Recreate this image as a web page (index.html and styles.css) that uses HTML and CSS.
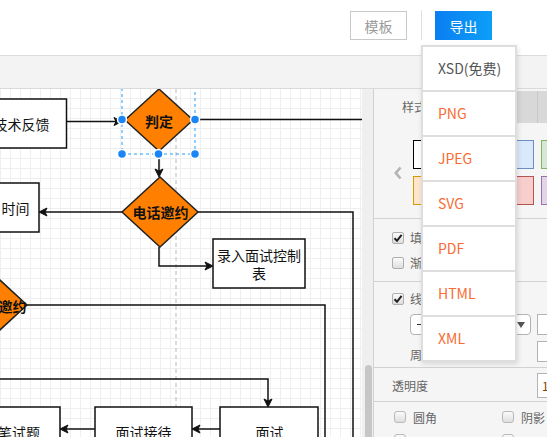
FILE: index.html
```html
<!DOCTYPE html>
<html lang="zh-CN">
<head>
<meta charset="utf-8">
<title>流程图编辑器</title>
<link rel="stylesheet" href="styles.css">
</head>
<body>
<header class="topbar">
  <button class="btn btn-template">模板</button>
  <span class="divider"></span>
  <button class="btn btn-export">导出</button>
</header>
<div class="toolstrip"></div>
<main class="workspace">
  <div class="canvas">
    <svg class="diagram" width="362" height="348" viewBox="0 89 362 348">
      <line class="guide" x1="176" y1="89" x2="176" y2="437"/>
      <!-- edges -->
      <polyline class="edge" points="66.5,121.5 116,121.5"/>
      <polygon class="head" points="122,121.5 114,117.5 116,121.5 114,125.5"/>
      <polyline class="edge" points="193,119.5 362,119.5"/>
      <polyline class="edge" points="159,151 159,171"/>
      <polygon class="head" points="159,177 155,169 159,171 163,169"/>
      <polyline class="edge" points="122,212 45,212"/>
      <polygon class="head" points="39,212 47,208 45,212 47,216"/>
      <polyline class="edge" points="198,212 353,212 353,437"/>
      <polyline class="edge" points="159,247 159,266 207,266"/>
      <polygon class="head" points="213,266 205,262 207,266 205,270"/>
      <polyline class="edge" points="27,305 325,305 325,437"/>
      <polyline class="edge" points="0,379 268,379 268,401"/>
      <polygon class="head" points="268,407 264,399 268,401 272,399"/>
      <polyline class="edge" points="220,429 198,429"/>
      <polygon class="head" points="192,429 200,425 198,429 200,433"/>
      <polyline class="edge" points="95,429 66,429"/>
      <polygon class="head" points="60,429 68,425 66,429 68,433"/>
      <!-- boxes -->
      <rect class="box" x="-30" y="99" width="96.5" height="49"/>
      <rect class="box" x="-70" y="183" width="109" height="49"/>
      <rect class="box" x="213" y="239" width="92" height="49"/>
      <rect class="box" x="-40" y="407" width="100" height="50"/>
      <rect class="box" x="95" y="407" width="97" height="50"/>
      <rect class="box" x="220" y="407" width="98" height="50"/>
      <!-- diamonds -->
      <polygon class="diamond" points="159,89 193,120 159,151 125,120"/>
      <polygon class="diamond" points="160,177 198,212 160,247 122,212"/>
      <polygon class="diamond" points="-11,270 27,305 -11,340 -49,305"/>
      <!-- labels -->
      <text class="label" x="49.5" y="124" text-anchor="end">技术反馈</text>
      <text class="label" x="29.5" y="207.5" text-anchor="end">时间</text>
      <text class="label" x="259" y="255" text-anchor="middle">录入面试控制<tspan x="259" dy="18">表</tspan></text>
      <text class="label" x="40" y="432" text-anchor="end">笔试题</text>
      <text class="label" x="143.5" y="432" text-anchor="middle">面试接待</text>
      <text class="label" x="269.5" y="432" text-anchor="middle">面试</text>
      <text class="label bold" x="159" y="121" text-anchor="middle">判定</text>
      <text class="label bold" x="160.5" y="212" text-anchor="middle">电话邀约</text>
      <text class="label bold" x="26.5" y="306" text-anchor="end">邀约</text>
      <!-- selection -->
      <polyline class="sel" points="122,88 122,154 195,154 195,88"/>
      <circle class="handle" cx="122" cy="119.5" r="4.5"/>
      <circle class="handle" cx="195" cy="119.5" r="4.5"/>
      <circle class="handle" cx="122" cy="154" r="4.5"/>
      <circle class="handle" cx="158.5" cy="154" r="4.5"/>
      <circle class="handle" cx="195" cy="154" r="4.5"/>
    </svg>
  </div>
  <div class="vscroll"><div class="thumb"></div></div>
  <aside class="panel">
    <div class="tabs">
      <div class="tab active">样式</div>
      <div class="tab gray"></div>
      <div class="tab gray"></div>
    </div>
    <div class="swatches">
      <div class="prev">
        <svg width="8" height="14" viewBox="0 0 8 14"><path d="M6.5 1.5 L1.8 7 L6.5 12.5" fill="none" stroke="#b3b3b3" stroke-width="2.6"/></svg>
      </div>
      <div class="swatch-grid">
        <span class="swatch sw-default"></span>
        <span class="swatch sw-gray"></span>
        <span class="swatch sw-yellow"></span>
        <span class="swatch sw-blue"></span>
        <span class="swatch sw-green"></span>
        <span class="swatch sw-orange"></span>
        <span class="swatch sw-yellow"></span>
        <span class="swatch sw-gray"></span>
        <span class="swatch sw-red"></span>
        <span class="swatch sw-purple"></span>
      </div>
    </div>
    <div class="section fill">
      <label class="check-row"><span class="checkbox checked"><svg width="10" height="10" viewBox="0 0 10 10"><path d="M1.5 5.2 L4 7.8 L8.6 1.8" fill="none" stroke="#222" stroke-width="2"/></svg></span>填充</label>
      <label class="check-row"><span class="checkbox"></span>渐变</label>
    </div>
    <div class="section line">
      <label class="check-row"><span class="checkbox checked"><svg width="10" height="10" viewBox="0 0 10 10"><path d="M1.5 5.2 L4 7.8 L8.6 1.8" fill="none" stroke="#222" stroke-width="2"/></svg></span>线条</label>
      <div class="line-row">
        <div class="select"><span class="line-sample"></span><span class="caret"></span></div>
        <div class="field"></div>
      </div>
      <div class="line-row">
        <span class="field-label">周长</span>
        <div class="field"></div>
      </div>
    </div>
    <div class="section opacity">
      <span class="opacity-label">透明度</span>
      <div class="field tall">100 %</div>
    </div>
    <div class="section options">
      <div class="opt-row">
        <label class="opt"><span class="checkbox round"></span>圆角</label>
        <label class="opt"><span class="checkbox round"></span>阴影</label>
      </div>
      <div class="opt-row lower">
        <span class="opt"><span class="checkbox round"></span></span>
        <span class="opt"><span class="checkbox round"></span></span>
      </div>
    </div>
  </aside>
</main>
<ul class="export-menu">
  <li class="menu-item free">XSD(免费)</li>
  <li class="menu-item">PNG</li>
  <li class="menu-item">JPEG</li>
  <li class="menu-item">SVG</li>
  <li class="menu-item">PDF</li>
  <li class="menu-item">HTML</li>
  <li class="menu-item">XML</li>
</ul>
</body>
</html>
```
FILE: styles.css
```css
html, body {
  margin: 0;
  padding: 0;
}
body {
  width: 547px;
  height: 437px;
  overflow: hidden;
  position: relative;
  background: #fff;
  font-family: "Noto Sans CJK SC", "Noto Sans", sans-serif;
}

/* top bar */
.topbar {
  height: 56px;
  box-sizing: border-box;
  border-bottom: 1px solid #dcdcdc;
  display: flex;
  justify-content: flex-end;
  align-items: flex-start;
  padding: 11px 55px 0 0;
}
.btn {
  width: 57px;
  height: 29px;
  box-sizing: border-box;
  padding: 0;
  font-family: inherit;
  font-size: 14px;
  display: flex;
  align-items: center;
  justify-content: center;
}
.btn-template {
  border: 1px solid #c9c9c9;
  background: #fff;
  color: #9b9b9b;
}
.divider {
  width: 1px;
  height: 30px;
  margin: -1px 13px 0 14px;
  background: #e0e0e0;
}
.btn-export {
  border: 0;
  color: #fff;
  background: linear-gradient(90deg, #0b7ef1, #0c9ff8);
}

.toolstrip {
  height: 33px;
  box-sizing: border-box;
  background: #f3f3f3;
  border-bottom: 1px solid #dadada;
}

/* workspace */
.workspace {
  display: flex;
  height: 348px;
  overflow: hidden;
}
.canvas {
  flex: 0 0 362px;
  height: 348px;
  background-color: #fff;
  background-image:
    linear-gradient(#efefef 1px, transparent 1px),
    linear-gradient(90deg, #efefef 1px, transparent 1px);
  background-size: 10px 10px;
  background-position: 0 -1px;
  overflow: hidden;
}
.diagram {
  display: block;
  overflow: hidden;
}
.diagram .guide {
  stroke: #b8b8b8;
  stroke-width: 1;
  stroke-dasharray: 4 3;
}
.diagram .edge {
  fill: none;
  stroke: #111;
  stroke-width: 1.5;
}
.diagram .head {
  fill: #111;
  stroke: #111;
  stroke-width: 1;
  stroke-linejoin: miter;
}
.diagram .box {
  fill: #fff;
  stroke: #111;
  stroke-width: 1.5;
}
.diagram .diamond {
  fill: #ff8000;
  stroke: #222;
  stroke-width: 1.5;
}
.diagram .label {
  font-family: "Noto Sans CJK SC", sans-serif;
  font-size: 14px;
  fill: #111;
  dominant-baseline: central;
}
.diagram .label.bold {
  font-weight: bold;
}
.diagram .sel {
  fill: none;
  stroke: #1ea0ff;
  stroke-width: 1;
  stroke-dasharray: 3 3;
}
.diagram .handle {
  fill: #1a86f5;
  stroke: #fff;
  stroke-width: 1.5;
}

.vscroll {
  flex: 0 0 11px;
  background: #efefef;
  display: flex;
  flex-direction: column;
  justify-content: flex-end;
}
.thumb {
  width: 7px;
  height: 72px;
  margin-left: 3px;
  background: #c6c6c6;
  border-radius: 4px 4px 0 0;
}

/* format panel */
.panel {
  flex: 0 0 200px;
  border-left: 1px solid #d2d2d2;
  background: #f5f5f5;
  font-size: 12px;
  color: #666;
}
.tabs {
  display: flex;
  height: 34px;
}
.tab {
  box-sizing: border-box;
  height: 34px;
}
.tab.active {
  width: 66px;
  padding-left: 28px;
  line-height: 36px;
}
.tab.gray {
  width: 97px;
  margin-top: 2px;
  height: 32px;
  background: #d8d8d8;
  border-left: 1px solid #c7c7c7;
}

.swatches {
  display: flex;
  align-items: flex-start;
  height: 96px;
  box-sizing: border-box;
  padding: 17px 0 0 20px;
  border-bottom: 1px solid #d2d2d2;
}
.prev {
  width: 19px;
  height: 65px;
  display: flex;
  align-items: center;
}
.prev svg {
  display: block;
}
.swatch-grid {
  display: grid;
  grid-template-columns: repeat(5, 25px);
  grid-auto-rows: 29px;
  gap: 7px;
}
.swatch {
  box-sizing: border-box;
  border: 1px solid;
}
.sw-default { background: #fff; border-color: #000; }
.sw-gray { background: #f5f5f5; border-color: #666; }
.sw-yellow { background: #fff2cc; border-color: #d6b656; }
.sw-blue { background: #dae8fc; border-color: #6c8ebf; }
.sw-green { background: #d5e8d4; border-color: #82b366; }
.sw-orange { background: #ffe6cc; border-color: #d79b00; }
.sw-red { background: #f8cecc; border-color: #b85450; }
.sw-purple { background: #e1d5e7; border-color: #9673a6; }

.section {
  border-bottom: 1px solid #d2d2d2;
  padding-left: 18px;
}
.check-row {
  display: flex;
  align-items: center;
  gap: 6px;
  height: 25px;
}
.checkbox {
  width: 12px;
  height: 12px;
  box-sizing: border-box;
  border: 1px solid #aeaeae;
  border-radius: 2px;
  background: linear-gradient(#fbfbfb, #dedede);
  display: flex;
  align-items: center;
  justify-content: center;
  flex: 0 0 auto;
}
.checkbox svg {
  display: block;
}
.checkbox.round {
  width: 12px;
  height: 12px;
  border-radius: 3px;
  border-color: #b9b9b9;
}

.fill {
  padding-top: 6px;
  padding-bottom: 6px;
}
.line {
  padding-top: 4px;
  padding-bottom: 5px;
}
.line-row {
  display: flex;
  align-items: center;
  gap: 6px;
  margin: 3px 0 0 18px;
  height: 21px;
}
.line-row + .line-row {
  margin-top: 6px;
}
.select {
  width: 121px;
  height: 21px;
  box-sizing: border-box;
  border: 1px solid #b3b3b3;
  border-radius: 4px;
  background: #fff;
  display: flex;
  align-items: center;
  justify-content: space-between;
  padding: 0 5px 0 6px;
}
.line-sample {
  width: 90px;
  border-top: 1px solid #333;
}
.caret {
  width: 0;
  height: 0;
  border-left: 4px solid transparent;
  border-right: 4px solid transparent;
  border-top: 6px solid #555;
}
.field {
  width: 40px;
  height: 21px;
  box-sizing: border-box;
  border: 1px solid #b3b3b3;
  background: #fff;
  flex: 0 0 auto;
}
.field-label {
  width: 121px;
  padding-top: 5px;
}
.opacity {
  display: flex;
  align-items: center;
  height: 34px;
  box-sizing: border-box;
  padding-top: 1px;
}
.opacity-label {
  width: 145px;
}
.field.tall {
  height: 25px;
  width: 50px;
  line-height: 23px;
  padding-left: 4px;
  font-size: 12px;
  color: #8a4300;
}
.options {
  border-bottom: 0;
  padding: 4px 0 0 20px;
}
.opt-row {
  display: flex;
  height: 22px;
  align-items: center;
}
.opt-row.lower {
  align-items: flex-start;
  padding-top: 6px;
  box-sizing: border-box;
}
.opt {
  width: 108px;
  display: flex;
  align-items: center;
  gap: 7px;
  font-size: 12px;
}

/* export dropdown */
.export-menu {
  position: absolute;
  left: 421px;
  top: 45px;
  width: 92px;
  margin: 0;
  padding: 0;
  list-style: none;
  border: 2px solid #dedede;
  background: #dedede;
  display: flex;
  flex-direction: column;
  gap: 2px;
  box-shadow: 1px 2px 5px rgba(0, 0, 0, 0.12);
}
.menu-item {
  height: 43px;
  line-height: 43px;
  padding-left: 15px;
  background: #fff;
  font-size: 14px;
  color: #f86b32;
}
.menu-item.free {
  color: #555;
}
```
